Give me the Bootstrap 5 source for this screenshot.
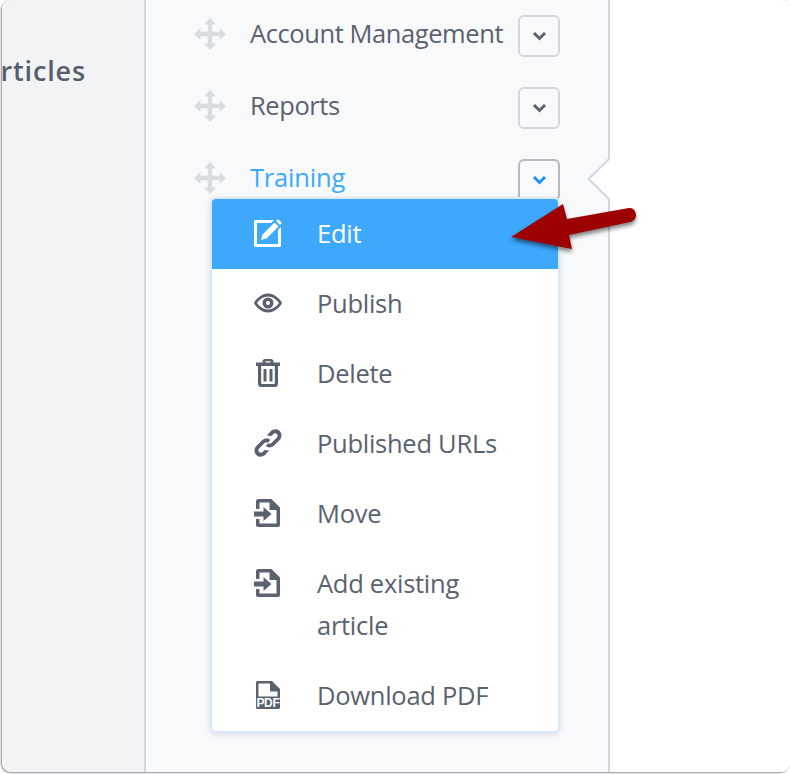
<!DOCTYPE html>
<html lang="en"><head><meta charset="utf-8"><title>Articles</title>
<link href="https://cdn.jsdelivr.net/npm/bootstrap@5.3.0/dist/css/bootstrap.min.css" rel="stylesheet">
<style>
html,body{height:100%;margin:0;background:#fff;overflow:hidden}
body{font-family:"Open Sans","Liberation Sans",sans-serif;color:#5a6270}
.win{width:788px;height:772px;margin-left:2px;border-radius:9px;overflow:hidden;box-shadow:-1px 1px 2px #8d8f93,0 0 1px #b8babd;position:relative;background:#fff}
.side{width:142px;background:#f1f3f5;padding-top:50px;overflow:hidden;white-space:nowrap}
.side-title{font-size:27px;font-weight:600;line-height:42px;letter-spacing:.85px;padding-right:58px;color:#565e6b}
.mid{width:466px;background:#f8f9fb;border-left:2px solid #d0d6e0;border-right:2px solid #d0d6e0;position:relative}
.rest{flex:1;background:#fff}
.rows{padding:15px 48px 0 48px}
.trow{height:42px;margin-bottom:30px;gap:24px}
.trow svg.grip{width:32px;height:32px;flex:none;margin-top:-4px}
.tname{font-size:25.5px;letter-spacing:-.42px;line-height:38px;flex:1;min-width:0;white-space:nowrap;margin-top:-6px}
.tname.on{color:#3ea8fd;letter-spacing:-.2px}
.chev{width:42px;height:42px;padding:0;background:transparent;border:2px solid #d3d6da;border-radius:6px;color:#5a6270;line-height:1;flex:none}
.chev.open{border-color:#b7b9bc;color:#1e90f5}
.chev svg{width:15px;height:10px;display:block;margin:auto}
.notch{position:absolute;left:441px;top:159px;width:23px;height:40px}
.menu{position:absolute;left:64px;top:197px;width:350px;padding:0;margin:0;border:2px solid #dbe9f6;border-radius:6px;box-shadow:0 2px 6px rgba(60,90,130,.14);background:#fff;display:block;overflow:hidden}
.menu .dropdown-item{display:flex;align-items:flex-start;padding:13px 12px 14px 42px;gap:35px;font-size:25.5px;letter-spacing:-.27px;line-height:42px;color:#5a6270;white-space:normal;height:70px}
.menu .dropdown-item.tall{height:112px}
.menu .dropdown-item.tall span{width:170px}
.menu .dropdown-item.active{background:#3ea8fd;color:#fff}
.menu svg{width:28px;height:28px;flex:none;margin-top:7px;fill:currentColor}
.pdf-t{font:700 12px "Liberation Sans",sans-serif;fill:#fff}
.pointer{position:absolute;left:507px;top:204px;width:134px;height:52px;overflow:visible;z-index:1001;filter:drop-shadow(0 3px 2px rgba(0,0,0,.5))}
</style></head><body>
<div class="win d-flex">
 <div class="side d-flex justify-content-end"><div class="side-title">rticles</div></div>
 <div class="mid">
  <svg width="0" height="0" class="position-absolute"><defs>
   <symbol id="g" viewBox="0 0 32 32"><path fill="#d8dde4" d="M16 0l6 6.500h-3.800V13.800H25.500V10l6.500 6-6.500 6v-3.800H18.200V25.500H22L16 32l-6-6.500h3.800V18.200H6.500V22L0 16l6.500-6v3.800h7.300V6.500H10z"/></symbol>
   <symbol id="c" viewBox="0 0 14 10"><path d="M1.500 2l5.500 5.500L12.500 2" fill="none" stroke="currentColor" stroke-width="3"/></symbol>
   <symbol id="mv" viewBox="0 0 28 28"><path fill-rule="evenodd" d="M4 0C3 0 2 1 2 2V10h3.500V3.500h10V11H22.500V24.500H5.500V20H2v6c0 1 1 2 2 2H24c1 0 2-1 2-2V8.500L17.500 0z"/><path d="M0 12.500H9.500V8L17.500 15 9.500 22V17.500H0z"/></symbol>
  </defs></svg>
  <div class="rows">
   <div class="trow d-flex align-items-center"><svg class="grip"><use href="#g"/></svg><span class="tname">Account Management</span><button class="chev" aria-label="Open"><svg><use href="#c"/></svg></button></div>
   <div class="trow d-flex align-items-center"><svg class="grip"><use href="#g"/></svg><span class="tname">Reports</span><button class="chev" aria-label="Open"><svg><use href="#c"/></svg></button></div>
   <div class="trow d-flex align-items-center"><svg class="grip"><use href="#g"/></svg><span class="tname on">Training</span><button class="chev open" aria-label="Close"><svg><use href="#c"/></svg></button></div>
  </div>
  <div class="dropdown-menu show menu">
   <a class="dropdown-item active" href="#"><svg viewBox="0 0 28 28"><path fill-rule="evenodd" d="M1.500 1H20l-3 3H3V25H24V11l3-3V26.500c0 .8-.7 1.500-1.500 1.500H1.500C.7 28 0 27.300 0 26.500V2.500C0 1.700.7 1 1.500 1z"/><path d="M7 21l1.500-5.500L20.500 3.500l4 4L12.500 19.500zM22 2l1-1c.6-.6 1.500-.6 2 0l2 2c.6.600.6 1.400 0 2l-1 1z"/></svg>Edit</a>
   <a class="dropdown-item" href="#"><svg viewBox="0 0 28 28"><path fill-rule="evenodd" d="M14 4.500C22 4.500 28 13 28 14s-6 9.500-14 9.500S0 15 0 14 6 4.500 14 4.500zM14 7.500C8.500 7.500 4.500 11.800 3.200 14c1.300 2.200 5.300 6.500 10.800 6.500S23.500 16.200 24.800 14C23.500 11.800 19.500 7.500 14 7.500zM14 8.500a5.500 5.500 0 1 1 0 11 5.500 5.500 0 0 1 0-11zM14 12a2 2 0 1 0 0 4 2 2 0 0 0 0-4z"/></svg>Publish</a>
   <a class="dropdown-item" href="#"><svg viewBox="0 0 28 28"><path fill-rule="evenodd" d="M8.500 3.500V2.500C8.500 1.100 9.600 0 11 0h6c1.400 0 2.500 1.100 2.500 2.500v1H26v3.500h-2V25c0 1.700-1.300 3-3 3H7c-1.700 0-3-1.300-3-3V7H2V3.500zM11.500 2.300V3.500h5V2.300zM7.200 7V25H20.800V7zM9.500 10h3v12.500h-3zM15.500 10h3v12.500h-3z"/></svg>Delete</a>
   <a class="dropdown-item" href="#"><svg viewBox="0 0 28 28"><path d="M16.500 2.500c2.800-2.800 6.800-2.800 9.200-.4s2.500 6.500-.3 9.200l-5 5c-2.800 2.800-6.300 2.600-8.700.7l2.500-2.800c1 .7 2.300.8 3.500-.4l5-5c1.200-1.200 1.200-2.800.2-3.800s-2.600-1-3.800.2l-2 2c-1.300-.5-2.900-.7-4.500-.5z"/><path d="M11.500 25.500c-2.800 2.800-6.800 2.800-9.200.4s-2.500-6.500.3-9.200l5-5c2.800-2.800 6.300-2.600 8.700-.7l-2.500 2.800c-1-.7-2.300-.8-3.500.4l-5 5c-1.200 1.200-1.200 2.800-.2 3.800s2.600 1 3.800-.2l2-2c1.300.5 2.900.7 4.500.5z"/></svg>Published URLs</a>
   <a class="dropdown-item" href="#"><svg><use href="#mv"/></svg>Move</a>
   <a class="dropdown-item tall" href="#"><svg><use href="#mv"/></svg><span>Add existing article</span></a>
   <a class="dropdown-item" href="#"><svg viewBox="0 0 28 28"><path fill-rule="evenodd" d="M3.500 0H18l8 8V26.500c0 .8-.7 1.500-1.500 1.500H3.500C2.700 28 2 27.300 2 26.500V1.500C2 .7 2.700 0 3.500 0zM4.500 2.500V15.500H23.500V10.500H16V2.500z"/><text class="pdf-t" x="14" y="26" text-anchor="middle">PDF</text></svg>Download PDF</a>
  </div>
  <svg class="notch" viewBox="0 0 23 40"><path d="M23 0H22L1.500 20 22 40H23z" fill="#fff"/><path d="M22 0L1.500 20 22 40" fill="none" stroke="#d0d6e0" stroke-width="2"/></svg>
 </div>
 <div class="rest"></div>
 <svg class="pointer" viewBox="0 0 134 52"><path fill="#9c0000" d="M2 33L54 0 58 15 120 4C124 3.500 127 7 127 11 127 15 124 17.500 121 18L60 31 63 45z"/></svg>
</div>
</body></html>
